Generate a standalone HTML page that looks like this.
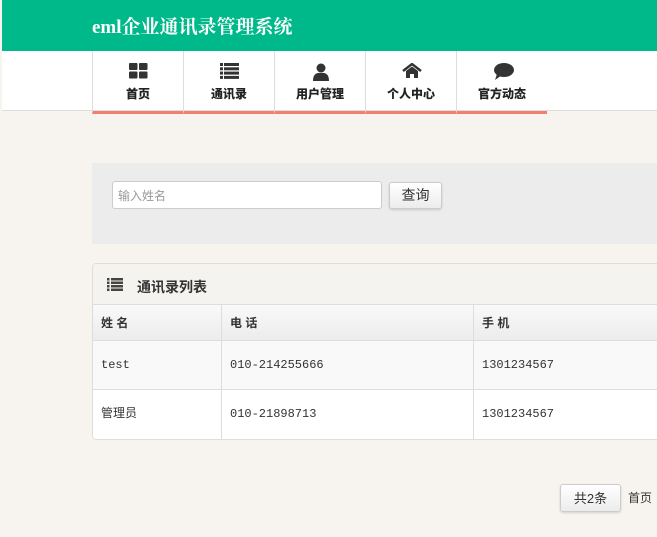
<!DOCTYPE html>
<html><head><meta charset="utf-8"><style>
*{margin:0;padding:0;box-sizing:border-box}
body{width:657px;height:537px;overflow:hidden;background:#f7f4f0;font-family:"Liberation Sans","Noto Sans CJK SC",sans-serif;font-size:12px;color:#333;position:relative}
.abs{position:absolute}
#hdr{left:2px;top:0;width:655px;height:51px;background:#00b98b}
#hdr span{position:absolute;left:90px;top:12px;color:#fff;font-size:19px;font-weight:bold;font-family:"Liberation Serif","Noto Serif CJK SC",serif}
#nav{left:2px;top:51px;width:655px;height:60px;background:#fff;border-bottom:1px solid #ddd}
.ni{position:absolute;top:51px;width:91px;height:63px;border-left:1px solid #ddd;border-bottom:3px solid #f28070;text-align:center;font-weight:bold;font-size:12px;color:#222}
.ni svg{position:absolute;left:36px;top:12px}
.ni b{position:absolute;left:0;right:0;top:34px}
#srch{left:92px;top:163px;width:565px;height:81px;background:#ececec}
#inp{left:112px;top:181px;width:270px;height:28px;background:#fff;border:1px solid #ccc;border-radius:3px;color:#999;padding:5px 5px;font-size:12px}
.btn{background:linear-gradient(#fff,#ececec);border:1px solid #ccc;border-radius:3px;box-shadow:0 1px 2px rgba(0,0,0,.15);text-align:center;font-size:14px;color:#333}
#tbl{left:92px;top:263px;width:570px;height:177px;border:1px solid #ddd;border-radius:4px;background:#fff;overflow:hidden}
#th{position:absolute;left:0;top:0;width:100%;height:41px;background:#f5f3f0;border-bottom:1px solid #ddd}
#th b{position:absolute;left:44px;top:13px;font-size:14px;color:#333}
.r{position:absolute;left:0;width:100%;border-bottom:1px solid #ddd}
.c{position:absolute;top:0;height:100%;border-left:1px solid #ddd;padding-left:8px;font-family:"Liberation Mono","Noto Sans CJK SC",monospace;font-size:12px}
</style></head><body>
<div id="hdr" class="abs"><span>eml企业通讯录管理系统</span></div>
<div id="nav" class="abs"></div>
<div class="ni" style="left:92px"><svg width="20" height="16"><rect x="0" y="0" width="8.5" height="7" rx="1" fill="#333"/><rect x="10" y="0" width="8.5" height="7" rx="1" fill="#333"/><rect x="0" y="8.5" width="8.5" height="7" rx="1" fill="#333"/><rect x="10" y="8.5" width="8.5" height="7" rx="1" fill="#333"/></svg><b>首页</b></div>
<div class="ni" style="left:183px"><svg width="20" height="16"><g fill="#333"><rect x="0" y="0" width="3" height="3"/><rect x="4" y="0" width="15" height="3"/><rect x="0" y="4.3" width="3" height="3"/><rect x="4" y="4.3" width="15" height="3"/><rect x="0" y="8.6" width="3" height="3"/><rect x="4" y="8.6" width="15" height="3"/><rect x="0" y="12.9" width="3" height="3"/><rect x="4" y="12.9" width="15" height="3"/></g></svg><b>通讯录</b></div>
<div class="ni" style="left:274px"><svg width="20" height="18"><circle cx="10" cy="5" r="4.5" fill="#333"/><path d="M2 18 Q2 9 10 10 Q18 9 18 18Z" fill="#333"/></svg><b>用户管理</b></div>
<div class="ni" style="left:365px"><svg width="20" height="16"><path d="M1 8 L10 1 L19 8" stroke="#333" stroke-width="2.4" fill="none"/><path d="M4 8 L10 3.5 L16 8 V15 H12 V11 H8 V15 H4Z" fill="#333"/></svg><b>个人中心</b></div>
<div class="ni" style="left:456px"><svg width="22" height="18"><ellipse cx="11" cy="7" rx="10" ry="7" fill="#333"/><path d="M4 11 L2 17 L9 12Z" fill="#333"/></svg><b>官方动态</b></div>
<div id="srch" class="abs"></div>
<div id="inp" class="abs">输入姓名</div>
<div class="abs btn" style="left:389px;top:182px;width:53px;height:27px;line-height:25px">查询</div>
<div id="tbl" class="abs">
<div id="th"><svg style="position:absolute;left:14px;top:14px" width="16" height="13"><g fill="#444"><rect x="0" y="0" width="2.5" height="2.5"/><rect x="4" y="0" width="12" height="2.5"/><rect x="0" y="3.5" width="2.5" height="2.5"/><rect x="4" y="3.5" width="12" height="2.5"/><rect x="0" y="7" width="2.5" height="2.5"/><rect x="4" y="7" width="12" height="2.5"/><rect x="0" y="10.5" width="2.5" height="2.5"/><rect x="4" y="10.5" width="12" height="2.5"/></g></svg><b>通讯录列表</b></div>
<div class="r" style="top:41px;height:36px;background:linear-gradient(#f9f9f9,#ececec);font-weight:bold;line-height:36px">
<div class="c" style="left:0;border:0;font-family:'Liberation Sans','Noto Sans CJK SC',sans-serif;font-weight:bold">姓 名</div><div class="c" style="left:128px;font-family:'Liberation Sans','Noto Sans CJK SC',sans-serif;font-weight:bold">电 话</div><div class="c" style="left:380px;font-family:'Liberation Sans','Noto Sans CJK SC',sans-serif;font-weight:bold">手 机</div></div>
<div class="r" style="top:77px;height:49px;background:#f9f9f9;line-height:48px">
<div class="c" style="left:0;border:0">test</div><div class="c" style="left:128px">010-214255666</div><div class="c" style="left:380px">1301234567</div></div>
<div class="r" style="top:126px;height:50px;background:#fff;line-height:48px;border:0">
<div class="c" style="left:0;border:0">管理员</div><div class="c" style="left:128px">010-21898713</div><div class="c" style="left:380px">1301234567</div></div>
</div>
<div class="abs btn" style="left:560px;top:484px;width:61px;height:28px;line-height:27px;font-size:13px">共2条</div>
<div class="abs" style="left:628px;top:489px;font-size:12px;color:#333">首页</div>
</body></html>
